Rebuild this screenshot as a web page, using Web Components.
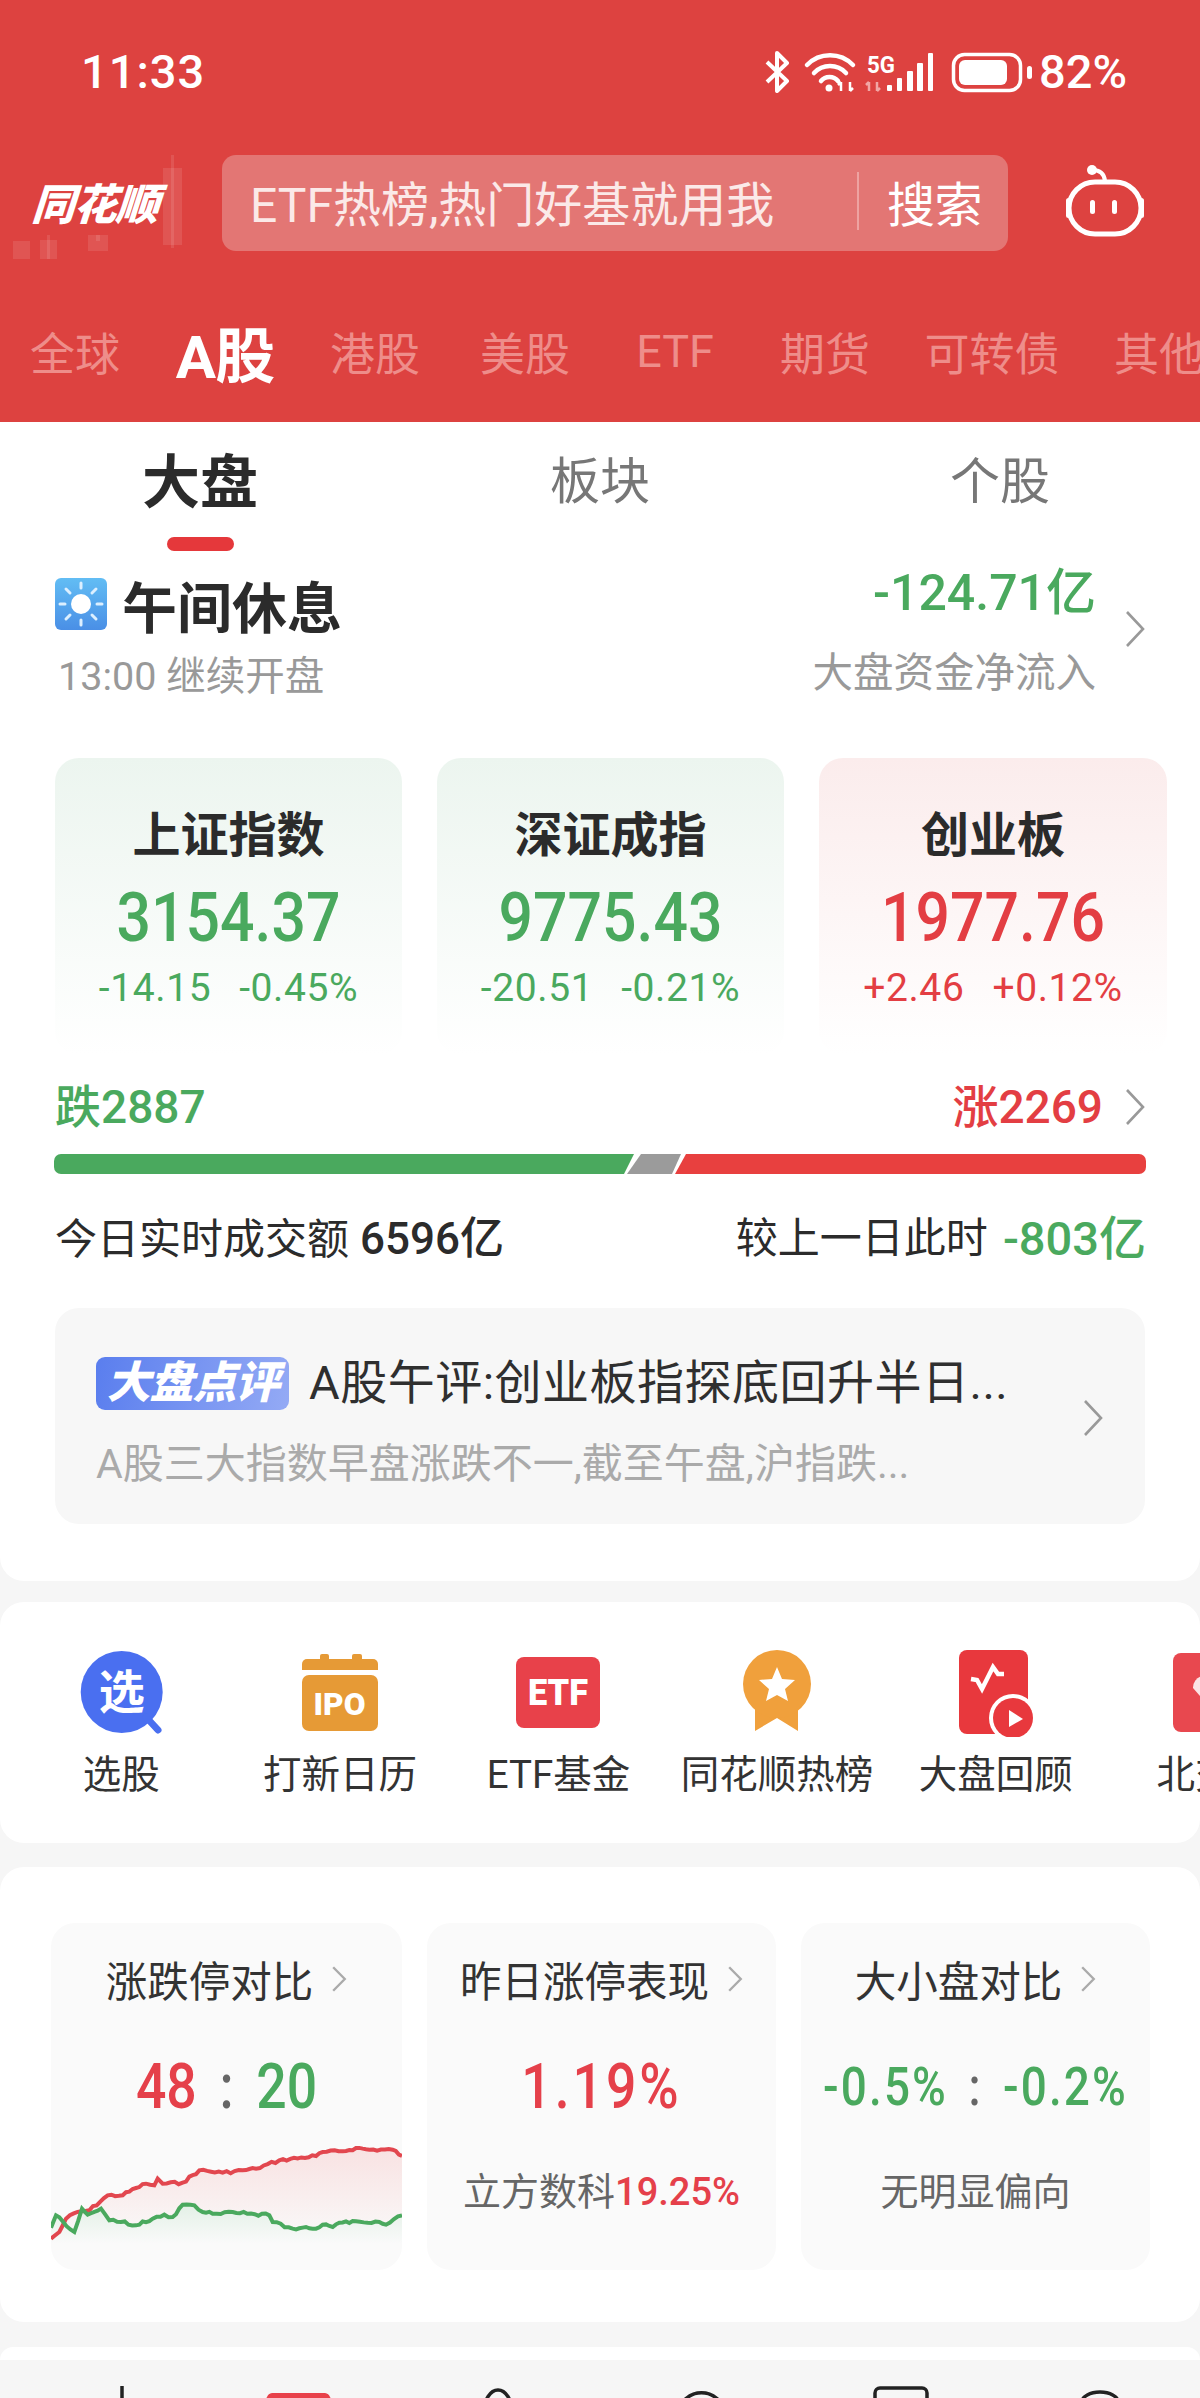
<!DOCTYPE html>
<html lang="zh-CN"><head><meta charset="utf-8"><title>同花顺</title>
<style>
html,body{margin:0;padding:0;}
body{width:1200px;height:2398px;overflow:hidden;background:#f6f6f6;font-family:Roboto,"Noto Sans CJK SC",sans-serif;color:#2b2b2b;}
</style></head><body>
<app-header></app-header>
<market-panel>
  <sub-tabs></sub-tabs>
  <session-head></session-head>
  <div slot="cards" style="display:contents">
    <index-card name="上证指数" value="3154.37" a="-14.15" b="-0.45%" tone="down"></index-card>
    <index-card name="深证成指" value="9775.43" a="-20.51" b="-0.21%" tone="down"></index-card>
    <index-card name="创业板" value="1977.76" a="+2.46" b="+0.12%" tone="up"></index-card>
  </div>
  <breadth-block slot="after"></breadth-block>
  <news-card slot="after" title-text="A股午评:创业板指探底回升半日..." sub="A股三大指数早盘涨跌不一,截至午盘,沪指跌..."></news-card>
</market-panel>
<tool-row>
  <tool-item label="选股"><svg width="100" height="87" viewBox="71 1648 100 87"><circle cx="121.7" cy="1690" r="41" fill="#4a6ff0"/><line x1="146" y1="1715" x2="158" y2="1728" stroke="#4a6ff0" stroke-width="7" stroke-linecap="round"/><text x="121.7" y="1706" text-anchor="middle" font-size="46" font-weight="700" fill="#fff" font-family="Noto Sans CJK SC">选</text></svg></tool-item>
  <tool-item label="打新日历"><svg width="100" height="87" viewBox="290 1648 100 87"><rect x="320" y="1652" width="9" height="10" rx="2" fill="#e69a36"/><rect x="352" y="1652" width="10" height="10" rx="2" fill="#e69a36"/><path d="M302 1668v-6a5 5 0 0 1 5-5h66a5 5 0 0 1 5 5v6z" fill="#e69a36"/><rect x="302" y="1673" width="76" height="56" rx="7" fill="#e69a36"/><text x="339.500" y="1713" text-anchor="middle" font-size="32" font-weight="900" fill="#fff" font-family="Roboto" textLength="52" lengthAdjust="spacingAndGlyphs">IPO</text></svg></tool-item>
  <tool-item label="ETF基金"><svg width="100" height="87" viewBox="508 1648 100 87"><rect x="516" y="1655" width="84" height="71" rx="8" fill="#e8414a"/><text x="558" y="1703" text-anchor="middle" font-size="36" font-weight="900" fill="#fff" font-family="Roboto" textLength="60" lengthAdjust="spacingAndGlyphs">ETF</text></svg></tool-item>
  <tool-item label="同花顺热榜"><svg width="100" height="87" viewBox="727 1648 100 87"><polygon points="755,1698 798,1698 798,1729 777,1716 755,1729" fill="#f0a03c"/><circle cx="777" cy="1682" r="34" fill="#f0a03c"/><polygon points="777,1665 782,1677 795,1678 785,1687 788,1699 777,1693 766,1699 769,1687 759,1678 772,1677" fill="#fff"/></svg></tool-item>
  <tool-item label="大盘回顾"><svg width="100" height="87" viewBox="945 1648 100 87"><rect x="958" y="1648" width="69" height="84" rx="8" fill="#e8383d"/><polyline points="970,1677 976,1678 981,1687 992,1665 997,1672 1003,1672" fill="none" stroke="#fff" stroke-width="4.500"/><circle cx="1012" cy="1716" r="24" fill="#fff"/><circle cx="1012" cy="1716" r="20" fill="#e8383d"/><polygon points="1008,1708 1008,1725 1022,1717" fill="#fff"/></svg></tool-item>
  <tool-item label="北交所"><svg width="100" height="87" viewBox="1164 1648 100 87"><rect x="1173" y="1651" width="87" height="79" rx="8" fill="#e8484f"/><path d="M1214 1710l-21-24a12 12 0 0 1 9-12h24a12 12 0 0 1 9 12z" fill="#fbe3e4"/></svg></tool-item>
</tool-row>
<stats-panel>
  <stat-card label="涨跌停对比"><span><span style="color:#e5404a">48</span><span style="color:#666;margin:0 11px"> : </span><span style="color:#4aa95e">20</span></span></stat-card>
  <stat-card label="昨日涨停表现" note="立方数科" pct="19.25%"><span style="color:#e5404a;letter-spacing:3.5px">1.19%</span></stat-card>
  <stat-card label="大小盘对比" note="无明显偏向"><span style="color:#4aa95e;font-size:54px;letter-spacing:2.5px;white-space:nowrap">-0.5%<span style="color:#666;margin:0 8px"> : </span>-0.2%</span></stat-card>
</stats-panel>
<next-card></next-card>
<bottom-nav></bottom-nav>
<script>
const STACK='Roboto,"Noto Sans CJK SC",sans-serif';
const chev=(w=22,h=38,c='#999',sw=2.6)=>`<svg width="${w}" height="${h}" viewBox="0 0 22 38" preserveAspectRatio="none" style="display:block;flex:none"><polyline points="3,2 19,19 3,36" fill="none" stroke="${c}" stroke-width="${sw}"/></svg>`;
function make(name,render){
  customElements.define(name,class extends HTMLElement{
    constructor(){super();this.attachShadow({mode:'open'});}
    connectedCallback(){this.shadowRoot.innerHTML=render(this);}
  });
}
function jitter(pts,seed){
  let out=[],s=seed;
  const rnd=()=>{s=(s*9301+49297)%233280;return s/233280-.5;};
  for(let i=0;i<pts.length-1;i++){
    const [x0,y0]=pts[i],[x1,y1]=pts[i+1],n=Math.max(1,Math.round((x1-x0)/11));
    for(let k=0;k<n;k++){
      const t=k/n,y=y0+(y1-y0)*t+(k?rnd()*9:0);
      out.push((x0+(x1-x0)*t).toFixed(1)+','+y.toFixed(1));
    }
  }
  const l=pts[pts.length-1];out.push(l[0]+','+l[1]);
  return out.join(' ');
}
const RED=[[35,530],[60,510],[80,470],[115,450],[150,445],[205,400],[250,400],[290,378],[320,365],[345,370],[355,350],[370,365],[430,362],[480,325],[550,332],[610,325],[650,320],[720,295],[830,282],[850,270],[910,268],[950,258],[990,263],[1060,263],[1088,282]];
const GRN=[[35,497],[50,460],[70,478],[105,510],[128,440],[145,458],[185,440],[210,475],[245,480],[290,490],[340,470],[375,458],[400,465],[430,428],[465,430],[490,450],[520,455],[580,450],[690,460],[700,480],[760,500],[800,495],[830,500],[850,488],[880,495],[900,482],[950,478],[1020,480],[1040,488],[1088,460]];
make('app-header',()=>`<style>
:host{display:block;height:422px;background:#dd4240;color:#fff;font-family:${STACK};overflow:hidden}
.st{height:144px;display:flex;align-items:center;position:relative}
.time{margin-left:81px;font-size:47px;letter-spacing:1px;line-height:50px;font-weight:500}
.sicons{margin-left:auto;margin-right:165px}
.pct{position:absolute;left:1039px;top:46px;font-size:47px;line-height:52px;font-weight:500;white-space:nowrap}
.sr{height:118px;display:flex;align-items:center;position:relative}
.logo{width:222px;flex:none;height:96px;position:relative}
.logo svg{position:absolute;left:0;top:-8px}
.logo b{position:absolute;left:32px;top:20px;font-size:43px;line-height:60px;font-weight:900;font-style:italic;letter-spacing:-1px;transform:skewX(-4deg);white-space:nowrap}
.box{width:786px;height:96px;flex:none;background:#e37674;border-radius:14px;display:flex;align-items:center;box-sizing:border-box;padding:0 0 5px 28px;color:#fbe9e8;font-size:48px;white-space:nowrap}
.ph{width:607px;flex:none}
.dv{width:2px;height:58px;background:#eea3a1;flex:none;margin-right:28px}
.s{color:#fff;letter-spacing:-.5px}
.bot{margin:0 0 6px 56px;display:block;flex:none}
.tabs{display:flex;height:138px;padding-top:20px;align-items:center;white-space:nowrap;font-size:45px;color:#ee8d8a}
.tabs span{flex:0 0 150px;text-align:center}
.tabs .on{color:#fff;font-size:60px;font-weight:700;letter-spacing:-1px}
.tabs .w{flex-basis:184px}
</style>
<div class="st"><span class="time">11:33</span>
<svg class="sicons" width="275" height="42" viewBox="760 50 275 42">
<polyline points="767,61 787,80 777,90 777,52 787,62 767,81" fill="none" stroke="#fff" stroke-width="4" stroke-linejoin="round"/>
<path d="M807 64a32 32 0 0 1 46 0M814 72a22 22 0 0 1 32 0M821 80a11 11 0 0 1 17 0" fill="none" stroke="#fff" stroke-width="4.500" stroke-linecap="round"/><circle cx="829" cy="87" r="3.500" fill="#fff"/>
<path d="M841 90v-9m-3 3l3-3 M850 81v9m3-3l-3 3" stroke="#fff" stroke-width="2.500" fill="none"/>
<text x="867" y="72" font-family="Roboto" font-size="24" font-weight="700" fill="#fff" textLength="28" lengthAdjust="spacingAndGlyphs">5G</text>
<path d="M869 90v-9m-3 3l3-3 M877 81v9m3-3l-3 3" stroke="#f1a7a5" stroke-width="2.500" fill="none"/>
<g fill="#fff"><rect x="887" y="84" width="5" height="6" rx="1"/><rect x="897" y="77" width="5" height="13" rx="1"/><rect x="907" y="70" width="6" height="20" rx="1"/><rect x="917" y="62" width="6" height="28" rx="1"/><rect x="928" y="52" width="5" height="38" rx="1"/></g>
<rect x="953.500" y="53.500" width="67" height="36" rx="11" fill="none" stroke="#fff" stroke-width="3.500"/><rect x="959" y="59" width="48" height="25" rx="6" fill="#fff"/><rect x="1027" y="65" width="5" height="13" rx="2.500" fill="#fff"/>
</svg><span class="pct">82%</span></div>
<div class="sr"><div class="logo"><svg width="222" height="112" viewBox="0 139 222 112" fill="#fff" fill-opacity=".1"><rect x="13" y="233" width="17" height="18"/><rect x="47" y="227" width="3" height="24"/><rect x="40" y="232" width="17" height="19"/><rect x="96" y="227" width="4" height="6"/><rect x="88" y="227" width="20" height="16"/><rect x="171" y="147" width="3" height="93"/><rect x="163" y="160" width="19" height="77"/></svg><b>同花顺</b></div>
<div class="box"><span class="ph">ETF热榜,热门好基就用我</span><span class="dv"></span><span class="s">搜索</span></div>
<svg class="bot" width="80" height="76" viewBox="1064 164 80 76"><path d="M1092 172q12 0 13 11" fill="none" stroke="#fff" stroke-width="4"/><circle cx="1092" cy="172" r="5" fill="#fff"/><rect x="1069" y="184" width="72" height="52" rx="26" fill="none" stroke="#fff" stroke-width="5"/><rect x="1066" y="200" width="5" height="20" rx="2.500" fill="#fff"/><rect x="1139" y="200" width="5" height="20" rx="2.500" fill="#fff"/><rect x="1090" y="202" width="5" height="14" rx="2.500" fill="#fff"/><rect x="1112" y="202" width="5" height="14" rx="2.500" fill="#fff"/></svg></div>
<div class="tabs"><span>全球</span><span class="on">A股</span><span>港股</span><span>美股</span><span>ETF</span><span>期货</span><span class="w">可转债</span><span>其他</span></div>`);

make('market-panel',()=>`<style>
:host{display:block;background:#fff;border-radius:0 0 24px 24px;padding-bottom:57px;font-family:${STACK}}
.cards{display:grid;grid-template-columns:347px 347px 348px;column-gap:35px;padding-left:55px}
</style><slot></slot><div class="cards"><slot name="cards"></slot></div><slot name="after"></slot>`);

make('sub-tabs',()=>`<style>
:host{display:grid;grid-template-columns:repeat(3,400px);height:130px}
div{display:flex;flex-direction:column;align-items:center;font-size:50px;line-height:120px;color:#777;height:130px}
.on{color:#2b2b2b;font-size:58px;font-weight:700;line-height:122px}
.on i{display:block;width:67px;height:14px;border-radius:7px;background:#e5383b;margin-top:-7px}
</style><div class="on"><span>大盘</span><i></i></div><div><span>板块</span></div><div><span>个股</span></div>`);

make('session-head',()=>`<style>
:host{display:flex;height:206px;padding:0 54px 0 55px;font-family:${STACK}}
.l{margin-top:26px}
.t{display:flex;align-items:center;height:52px;font-size:55px;font-weight:700;line-height:52px;white-space:nowrap;gap:15px;color:#2b2b2b}
.t svg{display:block;flex:none}
.t span{padding-top:10px}
.n{margin:25px 0 0 3px;font-size:39.500px;line-height:44px;color:#999;white-space:nowrap}
.r{margin:8px 0 0 auto;text-align:right}
.a{font-size:50px;line-height:66px;color:#4aa95e;font-weight:500;white-space:nowrap}
.b{margin-top:26px;font-size:40.500px;line-height:42px;color:#999;white-space:nowrap}
.c{margin:58px 0 0 28px}
</style><div class="l"><div class="t"><svg width="52" height="52" viewBox="0 0 52 52"><defs><linearGradient id="s" x1="0" y1="0" x2="0" y2="1"><stop offset="0" stop-color="#62bdf4"/><stop offset="1" stop-color="#4a8fe6"/></linearGradient></defs><rect width="52" height="52" rx="6" fill="url(#s)"/><circle cx="26" cy="26" r="10" fill="#fff"/><g stroke="#dcefff" stroke-width="3" stroke-linecap="round"><path d="M26 5v5M26 42v5M5 26h5M42 26h5M11 11l4 4M37 37l4 4M41 11l-4 4M15 37l-4 4"/></g></svg><span>午间休息</span></div><div class="n">13:00 继续开盘</div></div>
<div class="r"><div class="a">-124.71亿</div><div class="b">大盘资金净流入</div></div><div class="c">${chev()}</div>`);

make('index-card',h=>{const up=h.getAttribute('tone')==='up',c=up?'#e33e43':'#4aa95e',bg=up?'#fbecec':'#ecf5ef';return `<style>
:host{display:block;height:297px;border-radius:24px;background:linear-gradient(${bg},#fff);text-align:center;box-sizing:border-box;padding-top:53px;overflow:hidden;font-family:${STACK}}
.n{font-size:48px;line-height:50px;font-weight:700;color:#2b2b2b}
.v{margin-top:22px;font-size:69px;line-height:70px;font-weight:500;color:${c};transform:scaleX(.88);white-space:nowrap}
.s{margin-top:13px;font-size:39px;letter-spacing:.6px;line-height:44px;color:${c};display:flex;justify-content:center;gap:28px;white-space:nowrap}
</style><div class="n">${h.getAttribute('name')}</div><div class="v">${h.getAttribute('value')}</div><div class="s"><span>${h.getAttribute('a')}</span><span>${h.getAttribute('b')}</span></div>`;});

make('breadth-block',()=>`<style>
:host{display:block;padding:24px 54px 0 55px;font-family:${STACK}}
.top,.row{display:flex;align-items:center;white-space:nowrap}
.top{height:56px;font-size:46px;font-weight:500;line-height:56px}
.g{color:#4aa95e}.rd{color:#e33e43;margin-left:auto}
.top svg{margin-left:21px}
.bar{display:block;margin:19px 0 0 -1px}
.row{margin-top:40px;height:50px;font-size:42px;line-height:50px;color:#2b2b2b}
.row b{font-weight:500;margin-left:11px;font-size:44px}
.row .x{margin-left:auto}
.row .g{font-weight:500;margin-left:15px;font-size:47px}
</style><div class="top"><span class="g">跌2887</span><span class="rd">涨2269</span>${chev()}</div>
<svg class="bar" width="1092" height="20" viewBox="54 1154 1092 20"><defs><clipPath id="b"><rect x="54" y="1154" width="1092" height="20" rx="7"/></clipPath></defs><g clip-path="url(#b)"><polygon points="54,1154 634,1154 624,1174 54,1174" fill="#4aa95e"/><polygon points="641,1154 681,1154 672,1174 627,1174" fill="#9b9b9b"/><polygon points="686,1154 1146,1154 1146,1174 675,1174" fill="#e8403f"/></g></svg>
<div class="row"><span>今日实时成交额<b>6596亿</b></span><span class="x">较上一日此时</span><span class="g">-803亿</span></div>`);

make('news-card',h=>`<style>
:host{display:block;margin:44px 55px 0 55px;height:216px;background:#f7f7f7;border-radius:24px;box-sizing:border-box;padding:49px 0 0 41px;position:relative;font-family:${STACK}}
.r{display:flex;align-items:center;height:53px;white-space:nowrap}
.bd{flex:none;width:193px;height:53px;border-radius:9px;background:linear-gradient(100deg,#5a7eee,#94aaf5);color:#fff;font-size:44px;font-weight:900;font-style:italic;line-height:53px;text-align:center;margin-right:20px;letter-spacing:-1px}
.t{font-size:47px;color:#2f2f2f;letter-spacing:.5px;padding-bottom:10px}
.s{margin-top:30px;font-size:41px;line-height:48px;color:#aaa;white-space:nowrap}
.c{position:absolute;left:1027px;top:91px}
</style><div class="r"><span class="bd">大盘点评</span><span class="t">${h.getAttribute('title-text')}</span></div><div class="s">${h.getAttribute('sub')}</div><div class="c">${chev()}</div>`);

make('tool-row',()=>`<style>
:host{display:flex;margin-top:21px;height:241px;background:#fff;border-radius:24px;padding:48px 0 0 12px;box-sizing:border-box;overflow:hidden}
</style><slot></slot>`);
make('tool-item',h=>`<style>
:host{display:flex;flex:0 0 218.600px;flex-direction:column;align-items:center;font-family:${STACK}}
.i{height:87px;width:100px}
.l{margin-top:13px;font-size:38.500px;line-height:50px;color:#333;white-space:nowrap}
</style><div class="i"><slot></slot></div><div class="l">${h.getAttribute('label')}</div>`);

make('stats-panel',()=>`<style>
:host{display:grid;grid-template-columns:351px 349px 349px;column-gap:25px;margin-top:24px;height:455px;background:#fff;border-radius:24px;padding:56px 0 0 51px;box-sizing:border-box}
</style><slot></slot>`);
make('stat-card',h=>{const note=h.getAttribute('note'),pct=h.getAttribute('pct'),isChart=!note;
const r=jitter(RED,7),g=jitter(GRN,23);
return `<style>
:host{display:block;position:relative;height:347px;background:#fafafa;border-radius:24px;overflow:hidden;text-align:center;box-sizing:border-box;padding-top:31px;font-family:${STACK}}
.t{display:flex;justify-content:center;align-items:center;gap:18px;height:50px;font-size:41.500px;color:#333;white-space:nowrap}
.v{margin-top:48px;height:70px;line-height:70px;font-size:63px;font-weight:500;white-space:nowrap;display:flex;justify-content:center;align-items:center;transform:scaleX(.85)}
.n{margin-top:45px;font-size:38px;line-height:50px;color:#666;white-space:nowrap}
.n span{color:#e5404a;font-weight:500}
.ch{position:absolute;left:0;bottom:26px;display:block}
</style><div class="t"><span>${h.getAttribute('label')}</span>${chev(16,26,'#aaa',3.2)}</div><div class="v"><slot></slot></div>${note?`<div class="n">${note}${pct?`<span>${pct}</span>`:''}</div>`:''}
${isChart?`<svg class="ch" width="351" height="107" viewBox="35 225 1053 321"><defs><linearGradient id="fr" x1="0" y1="0" x2="0" y2="1"><stop offset="0" stop-color="#f8e2e2"/><stop offset="1" stop-color="#fafafa"/></linearGradient><linearGradient id="fg" x1="0" y1="0" x2="0" y2="1"><stop offset="0" stop-color="#e3f0e6"/><stop offset="1" stop-color="#fafafa"/></linearGradient></defs>
<polygon points="${r} 1088,546 35,546" fill="url(#fr)"/>
<polygon points="${g} 1088,546 35,546" fill="url(#fg)"/>
<polyline points="${r}" fill="none" stroke="#e2474f" stroke-width="12"/>
<polyline points="${g}" fill="none" stroke="#4aa95e" stroke-width="12"/></svg>`:''}`;});

make('next-card',()=>`<style>:host{display:block;margin-top:25px;height:13px;background:#fff;border-radius:24px 24px 0 0}</style>`);
make('bottom-nav',()=>`<style>:host{display:block;height:38px;background:#f6f6f6;overflow:hidden}svg{display:block}</style>
<svg width="1200" height="38" viewBox="0 2360 1200 38"><g fill="none" stroke="#222" stroke-width="3.500"><path d="M122 2386v20"/><path d="M484 2412a14 22 0 0 1 28 0"/><path d="M678 2412a24 24 0 0 1 47 0"/><path d="M875 2410v-17a5 5 0 0 1 5-5h42a5 5 0 0 1 5 5v17"/><path d="M1082 2412v-10a18 10 0 0 1 36 0v10"/></g><path d="M264 2402l3-5a6 6 0 0 1 5-4h53a6 6 0 0 1 5 4l3 5z" fill="#e8414a"/></svg>`);
</script>
</body></html>
